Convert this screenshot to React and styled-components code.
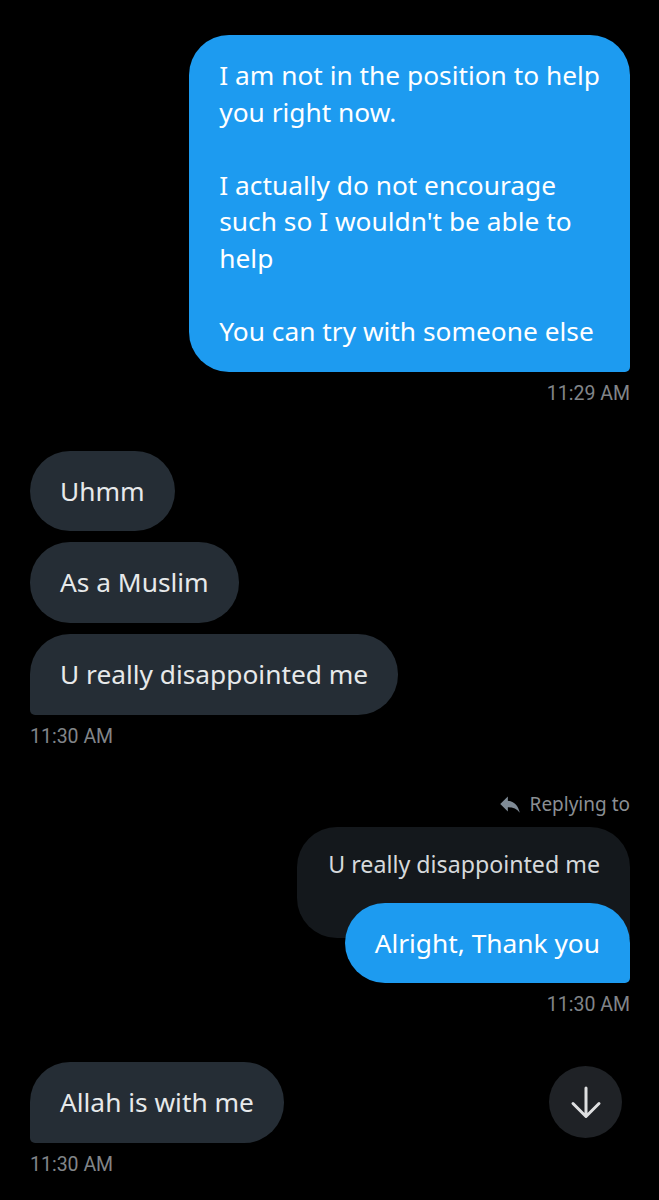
import styled, { createGlobalStyle } from 'styled-components';

const GlobalStyle = createGlobalStyle`
  html, body {
    margin: 0;
    padding: 0;
    background: #000;
  }
  #root {
    height: 1200px;
    overflow: hidden;
  }
`;

const App = () => {
  return (
    <>
      <GlobalStyle />
      <Thread>
        <Group $mine>
          <Bubble $mine $tail>
            {'I am not in the position to help\nyou right now.\n\nI actually do not encourage\nsuch so I wouldn\'t be able to\nhelp\n\nYou can try with someone else'}
          </Bubble>
          <Stamp>11:29 AM</Stamp>
        </Group>

        <Group>
          <Bubble>Uhmm</Bubble>
          <Bubble>As a Muslim</Bubble>
          <Bubble $tail>U really disappointed me</Bubble>
          <Stamp>11:30 AM</Stamp>
        </Group>

        <Group $mine>
          <ReplyLabel>
            <svg width="26" height="26" viewBox="0 0 24 24">
              <path
                d="M10 9V5l-7 7 7 7v-4.1c5 0 8.5 1.6 11 5.1-1-5-4-10-11-11z"
                fill="#7f8b96"
              />
            </svg>
            Replying to
          </ReplyLabel>
          <Quote>U really disappointed me</Quote>
          <Bubble $mine $tail $overlap>
            Alright, Thank you
          </Bubble>
          <Stamp>11:30 AM</Stamp>
        </Group>

        <Group>
          <Bubble $tail>Allah is with me</Bubble>
          <Stamp>11:30 AM</Stamp>
        </Group>
      </Thread>

      <ScrollDown>
        <svg width="32" height="34" viewBox="0 0 32 34" fill="none">
          <path
            d="M16 3v28M3 18.5L16 31.5 29 18.5"
            stroke="#dedfe0"
            strokeWidth="3"
            strokeLinecap="round"
            strokeLinejoin="round"
          />
        </svg>
      </ScrollDown>
    </>
  );
};

const Thread = styled.div`
  display: flex;
  flex-direction: column;
  gap: 45px;
  padding: 35px 29px 0 30px;
  font-family: 'Noto Sans', 'Open Sans', sans-serif;
`;

const Group = styled.div`
  display: flex;
  flex-direction: column;
  align-items: ${(p) => (p.$mine ? 'flex-end' : 'flex-start')};
  gap: 11px;
`;

const Bubble = styled.div`
  position: relative;
  box-sizing: border-box;
  white-space: pre;
  padding: 22px 30px;
  font-size: 26.3px;
  line-height: 36.6px;
  color: ${(p) => (p.$mine ? '#ffffff' : '#e7e9ea')};
  background: ${(p) => (p.$mine ? '#1d9bf0' : '#252d35')};
  border-radius: ${(p) =>
    !p.$tail ? '40px' : p.$mine ? '40px 40px 5px 40px' : '40px 40px 40px 5px'};
  margin-top: ${(p) => (p.$overlap ? '-46px' : '0')};
`;

const Quote = styled.div`
  box-sizing: border-box;
  padding: 20px 30px 57px 31px;
  font-size: 23.2px;
  line-height: 34px;
  color: #d6d9db;
  background: #14181c;
  border-radius: 40px 40px 0 40px;
`;

const Stamp = styled.div`
  font-family: Roboto, 'Liberation Sans', sans-serif;
  font-size: 19.5px;
  line-height: 24px;
  color: #818589;
  margin-top: -1px;
`;

const ReplyLabel = styled.div`
  display: flex;
  align-items: center;
  gap: 7px;
  height: 24px;
  margin-top: -2px;
  font-family: 'Noto Sans', sans-serif;
  font-size: 19px;
  line-height: 24px;
  color: #8b8f94;
`;

const ScrollDown = styled.div`
  position: absolute;
  left: 549px;
  top: 1066px;
  width: 73px;
  height: 72px;
  border-radius: 50%;
  background: #1f2226;
  display: flex;
  align-items: center;
  justify-content: center;
`;

export default App;
